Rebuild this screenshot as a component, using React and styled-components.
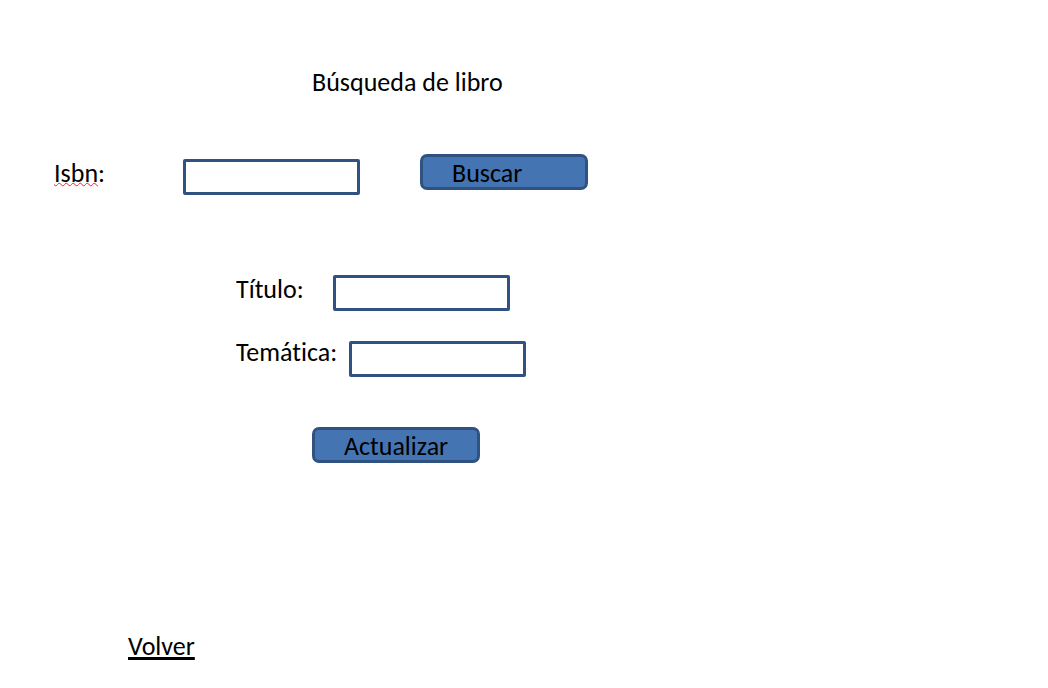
import React from "react";
import styled, { createGlobalStyle } from "styled-components";

const GlobalStyle = createGlobalStyle`
  * { box-sizing: border-box; }
  body {
    margin: 0;
    background: #fff;
    color: #000;
    font-family: Carlito, Calibri, Lato, sans-serif;
    font-size: 26px;
    line-height: 32px;
    font-variant-ligatures: none;
  }
`;

const Page = styled.main`
  padding: 66px 54px 24px;
`;

const Title = styled.h1`
  margin: 0 0 56px 258px;
  font-size: 26px;
  line-height: 32px;
  font-weight: 400;
`;

const SearchForm = styled.form`
  display: flex;
  align-items: flex-start;
`;

const Label = styled.label`
  flex: none;
  width: ${(p) => p.$width}px;
`;

const SearchLabel = styled(Label)`
  margin-top: 3px;
`;

const Misspelled = styled.span`
  text-decoration: underline wavy #f5202c 1px;
  text-underline-offset: 0;
  text-decoration-skip-ink: none;
`;

const TextBox = styled.input`
  width: 177px;
  height: 36px;
  padding: 0 8px;
  border: 3px solid #305280;
  border-radius: 2px;
  background: #fff;
  font: inherit;
`;

const SearchBox = styled.div`
  display: flex;
  margin: 5px 60px 0 0;
`;

const Button = styled.button`
  display: block;
  width: 168px;
  height: 36px;
  padding: 0 29px;
  border: 3px solid #305280;
  border-radius: 7px;
  background: #4474b2;
  color: #000;
  font: inherit;
  font-variant-ligatures: none;
  text-align: left;
`;

const BookForm = styled.form`
  display: flex;
  flex-direction: column;
  align-items: flex-start;
  gap: 25px;
  margin: 78px 0 0 182px;
`;

const Field = styled.div`
  display: flex;
  align-items: flex-start;

  ${TextBox} {
    margin-top: ${(p) => p.$drop}px;
  }
`;

const Actions = styled.div`
  margin: 25px 0 0 76px;
`;

const BackLink = styled.a`
  display: inline-block;
  margin: 167px 0 0 74px;
  color: inherit;
  text-decoration: underline 3px;
  text-underline-offset: 2px;
  text-decoration-skip-ink: none;
`;

export default function App() {
  return (
    <>
      <GlobalStyle />
      <Page>
        <Title>Búsqueda de libro</Title>
        <SearchForm onSubmit={(e) => e.preventDefault()}>
          <SearchLabel htmlFor="isbn" $width={129}>
            <Misspelled>Isbn</Misspelled>:
          </SearchLabel>
          <SearchBox>
            <TextBox id="isbn" type="text" />
          </SearchBox>
          <Button type="submit">Buscar</Button>
        </SearchForm>
        <BookForm onSubmit={(e) => e.preventDefault()}>
          <Field $drop={2}>
            <Label htmlFor="titulo" $width={97}>Título:</Label>
            <TextBox id="titulo" type="text" />
          </Field>
          <Field $drop={5}>
            <Label htmlFor="tematica" $width={113}>Temática:</Label>
            <TextBox id="tematica" type="text" />
          </Field>
          <Actions>
            <Button type="submit">Actualizar</Button>
          </Actions>
        </BookForm>
        <BackLink href="#volver">Volver</BackLink>
      </Page>
    </>
  );
}
